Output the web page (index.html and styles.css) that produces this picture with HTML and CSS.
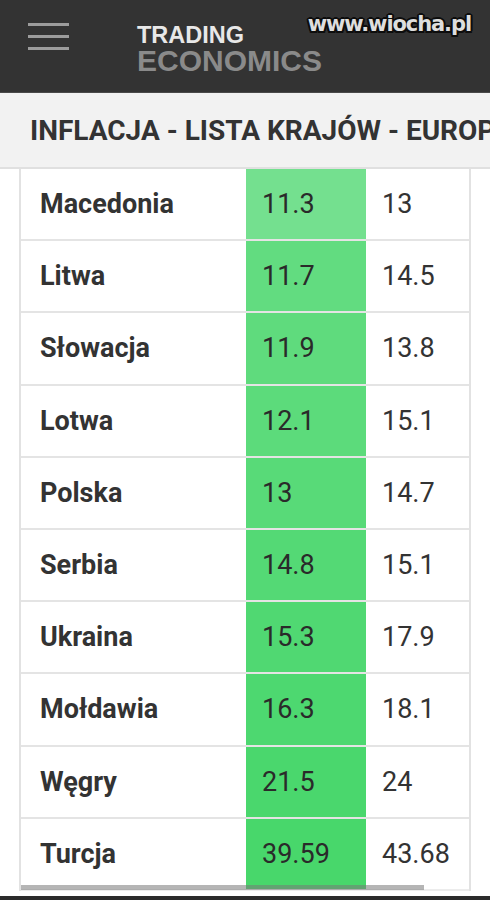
FILE: index.html
```html
<!DOCTYPE html>
<html lang="pl">
<head>
<meta charset="utf-8">
<title>Inflacja - lista krajów - Europa</title>
<link rel="stylesheet" href="styles.css">
</head>
<body>
<header class="topbar">
  <div class="burger"><span></span><span></span><span></span></div>
  <div class="logo">
    <div class="logo-top">TRADING</div>
    <div class="logo-bottom">ECONOMICS</div>
  </div>
  <div class="watermark">www.wiocha.pl</div>
</header>
<div class="titlebar">
  <h1 class="title">INFLACJA - LISTA KRAJÓW - EUROPA</h1>
</div>
<div class="table-wrap">
  <div class="row"><div class="name">Macedonia</div><div class="val g1">11.3</div><div class="prev">13</div></div>
  <div class="row"><div class="name">Litwa</div><div class="val g2">11.7</div><div class="prev">14.5</div></div>
  <div class="row"><div class="name">Słowacja</div><div class="val g3">11.9</div><div class="prev">13.8</div></div>
  <div class="row"><div class="name">Lotwa</div><div class="val g4">12.1</div><div class="prev">15.1</div></div>
  <div class="row"><div class="name">Polska</div><div class="val g5">13</div><div class="prev">14.7</div></div>
  <div class="row"><div class="name">Serbia</div><div class="val g6">14.8</div><div class="prev">15.1</div></div>
  <div class="row"><div class="name">Ukraina</div><div class="val g7">15.3</div><div class="prev">17.9</div></div>
  <div class="row"><div class="name">Mołdawia</div><div class="val g8">16.3</div><div class="prev">18.1</div></div>
  <div class="row"><div class="name">Węgry</div><div class="val g9">21.5</div><div class="prev">24</div></div>
  <div class="row last"><div class="name">Turcja</div><div class="val g10">39.59</div><div class="prev">43.68</div></div>
  <div class="scrollthumb"></div>
</div>
<div class="gap"></div>
<div class="navbar"></div>
</body>
</html>
```
FILE: styles.css
```css
html, body {
  margin: 0;
  padding: 0;
  background: #ffffff;
  font-family: Roboto, "Liberation Sans", sans-serif;
  color: #333333;
  overflow: hidden;
}

.topbar {
  position: relative;
  height: 92px;
  background: #333333;
  display: flex;
  align-items: flex-start;
  border-bottom: 1px solid #4a4a4a;
}

.burger {
  margin: 23px 0 0 28px;
  width: 41px;
  display: flex;
  flex-direction: column;
  gap: 9px;
}
.burger span {
  display: block;
  height: 3px;
  background: #9c9c9c;
}

.logo {
  margin: 23px 0 0 68px;
  font-family: "Liberation Sans", Arial, sans-serif;
  font-weight: bold;
}
.logo-top {
  font-size: 23.5px;
  line-height: 24px;
  color: #e8e8e8;
}
.logo-bottom {
  font-size: 30px;
  line-height: 27px;
  color: #8a8a8a;
}

.watermark {
  position: absolute;
  top: 13px;
  right: 19px;
  font-family: "DejaVu Sans", Verdana, sans-serif;
  font-weight: bold;
  font-size: 21px;
  line-height: 23px;
  letter-spacing: -1.1px;
  color: #dedede;
  text-shadow:
    -2px 0 0 #0d0d0d, 2px 0 0 #0d0d0d, 0 -2px 0 #0d0d0d, 0 2px 0 #0d0d0d,
    -1.5px -1.5px 0 #0d0d0d, 1.5px -1.5px 0 #0d0d0d, -1.5px 1.5px 0 #0d0d0d, 1.5px 1.5px 0 #0d0d0d;
}

.titlebar {
  height: 74px;
  background: #f2f2f2;
  border-bottom: 2px solid #e0e0e0;
  display: flex;
  align-items: center;
  overflow: hidden;
  white-space: nowrap;
}
.title {
  margin: 0 0 0 30px;
  font-size: 28px;
  font-weight: bold;
  color: #333333;
}

.table-wrap {
  position: relative;
  margin: 0 19px 0 19px;
  border-left: 2px solid #e2e2e2;
  border-right: 2px solid #e2e2e2;
  overflow: hidden;
}

.row {
  box-sizing: border-box;
  height: 72.2px;
  display: grid;
  grid-template-columns: 225px 120px 1fr;
  border-bottom: 2px solid #e4e4e4;
  font-size: 27px;
}
.row.last {
  border-bottom: 2px solid #ececec;
}
.row > div {
  display: flex;
  align-items: center;
}
.name {
  padding-left: 19px;
  font-weight: bold;
  color: #333333;
}
.val {
  padding-left: 16px;
  color: #2a2a2a;
}
.prev {
  padding-left: 16px;
  color: #333333;
}

.g1 { background: #74e08f; }
.g2 { background: #62dc80; }
.g3 { background: #5fdb7d; }
.g4 { background: #5cdb7b; }
.g5 { background: #58da78; }
.g6 { background: #54d975; }
.g7 { background: #50d872; }
.g8 { background: #4dd870; }
.g9 { background: #4ad76d; }
.g10 { background: #48d76b; }

.scrollthumb {
  position: absolute;
  left: 0;
  bottom: 1px;
  width: 403px;
  height: 5px;
  background: rgba(120, 120, 120, 0.55);
}

.gap {
  height: 5px;
}
.navbar {
  height: 10px;
  background: #2b2b2b;
}
```
